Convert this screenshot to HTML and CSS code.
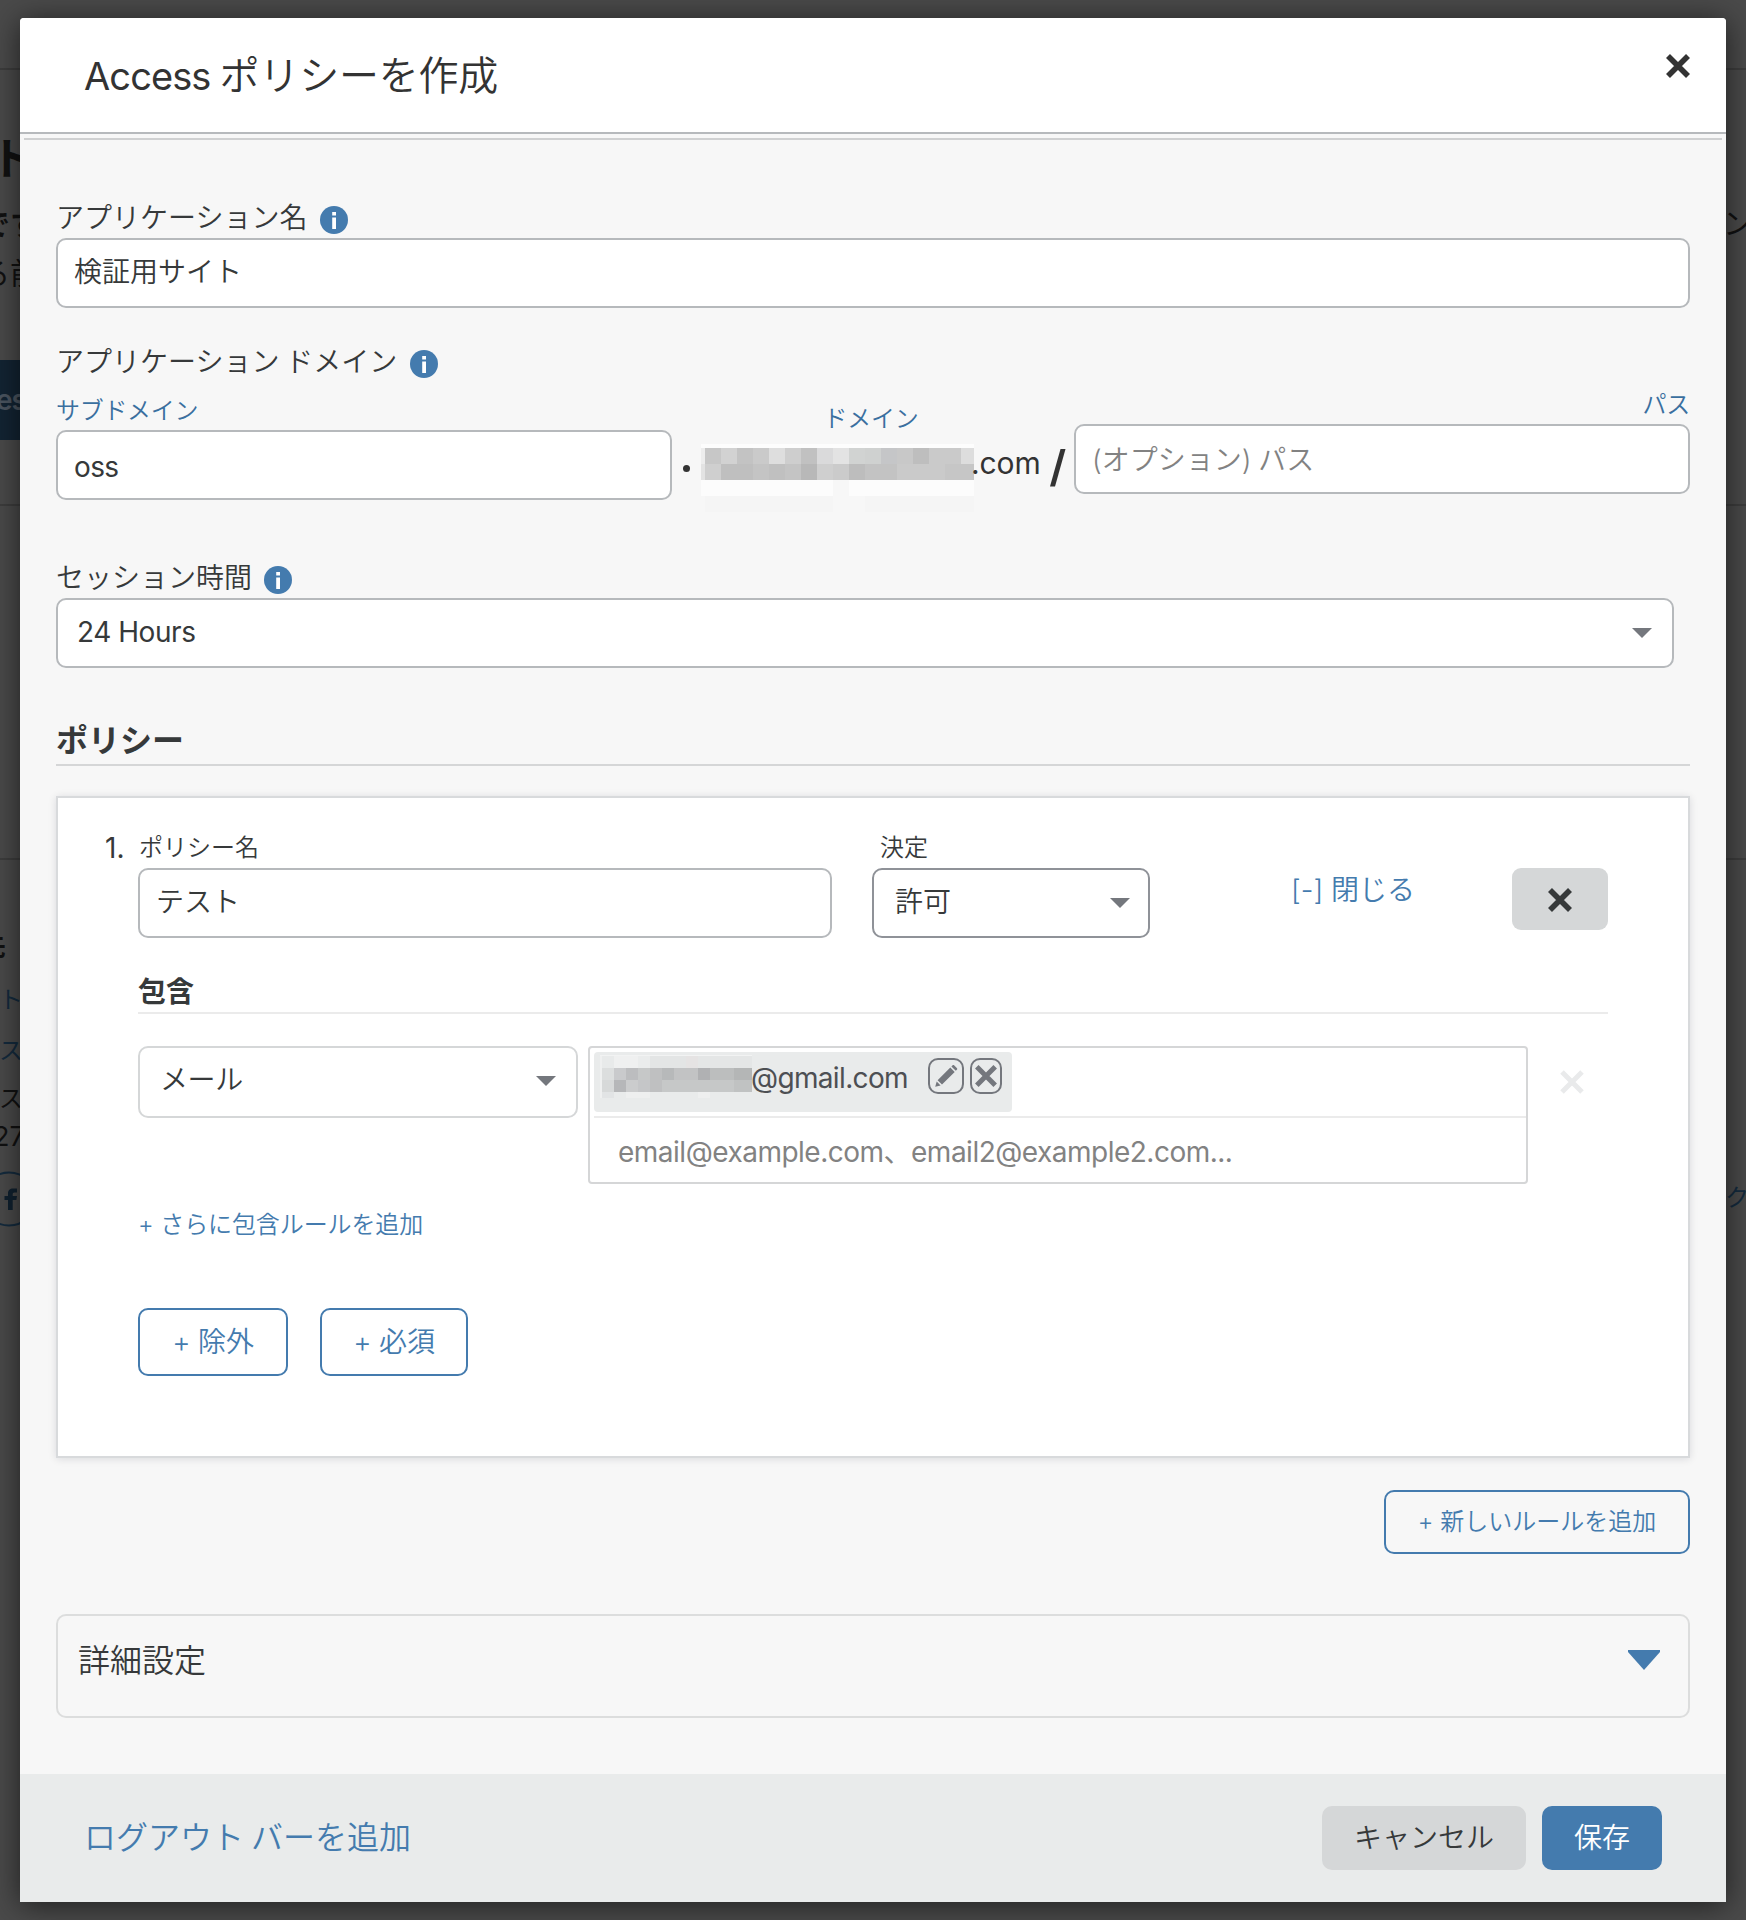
FILE: index.html
```html
<!DOCTYPE html>
<html lang="ja">
<head>
<meta charset="utf-8">
<title>Access ポリシーを作成</title>
<link rel="stylesheet" href="styles.css">
</head>
<body>
<div class="backdrop">
  <div class="page-left">
    <div class="pl pl-title">ト</div>
    <div class="pl pl-sub">です</div>
    <div class="pl pl-text">る前</div>
    <div class="pl pl-btn">ess</div>
    <div class="pl pl-head">先</div>
    <div class="pl pl-link">ト</div>
    <div class="pl pl-link2">ス</div>
    <div class="pl pl-plain">ス</div>
    <div class="pl pl-num">27</div>
    <svg class="pl-social" width="58" height="58" viewBox="0 0 58 58"><circle cx="29" cy="29" r="26.5" fill="none" stroke="#142b3e" stroke-width="2"/><path d="M28 40V30h-3.500v-4H28v-2.500c0-3.500 2-5 5-5h4v4h-2.500c-1.500 0-1.800.7-1.800 2V26H37l-.6 4h-3.700v10z" fill="#10212f"/></svg>
  </div>
  <div class="page-right">
    <div class="pr pr-text">ン</div>
    <div class="pr pr-link">ク</div>
  </div>
</div>

<div class="modal">
  <header class="modal-header">
    <h1 class="modal-title"><span class="title-latin">Access</span> ポリシーを作成</h1>
    <svg class="close" width="26" height="26" viewBox="0 0 26 26"><path d="M3 3L23 23M23 3L3 23" stroke="#333" stroke-width="5.600"/></svg>
  </header>
  <div class="rule-line"></div>
  <main class="form">
    <div class="label first">アプリケーション名<svg class="info" width="28" height="28" viewBox="0 0 28 28"><circle cx="14" cy="14" r="14" fill="#447bae"/><path d="M12.200 6h3.800v3.600h-3.800zM12.200 11.500h3.800v11.500h-3.800z" fill="#fff"/></svg></div>
    <div class="input">検証用サイト</div>

    <div class="label second">アプリケーション ドメイン<svg class="info" width="28" height="28" viewBox="0 0 28 28"><circle cx="14" cy="14" r="14" fill="#447bae"/><path d="M12.200 6h3.800v3.600h-3.800zM12.200 11.500h3.800v11.500h-3.800z" fill="#fff"/></svg></div>
    <div class="domain-row">
      <div class="sub-col">
        <div class="mini">サブドメイン</div>
        <div class="input latin">oss</div>
      </div>
      <div class="dom-col">
        <div class="mini center">ドメイン</div>
        <div class="dom-line">
          <span class="dot"></span>
          <svg class="mosaic" width="273" height="68" viewBox="0 0 273 68" shape-rendering="crispEdges">
            <path d="M0 0h273v4H0z" fill="#fdfdfd"/><path d="M0 4h4v16H0z" fill="#ededed"/><path d="M0 20h4v16H0z" fill="#e3e3e3"/>
            <path d="M4 4h16v16H4z" fill="#c7c7c7"/><path d="M20 4h16v16H20z" fill="#d2d2d2"/><path d="M36 4h16v16H36z" fill="#c3c3c3"/><path d="M52 4h16v16H52z" fill="#cacaca"/><path d="M68 4h16v16H68z" fill="#dedede"/><path d="M84 4h16v16H84z" fill="#cecece"/><path d="M100 4h16v16h-16z" fill="#c1c1c1"/><path d="M116 4h16v16h-16z" fill="#dadadb"/><path d="M132 4h16v16h-16z" fill="#e3e3e3"/><path d="M148 4h16v16h-16z" fill="#d1d3d2"/><path d="M164 4h16v16h-16z" fill="#cfd1d0"/><path d="M180 4h16v16h-16z" fill="#c5c6c8"/><path d="M196 4h16v16h-16z" fill="#c8c8c8"/><path d="M212 4h16v16h-16z" fill="#bebebe"/><path d="M228 4h32v16h-32z" fill="#cacaca"/><path d="M260 4h13v16h-13z" fill="#dddddd"/>
            <path d="M4 20h16v16H4z" fill="#cfcfcf"/><path d="M20 20h32v16H20z" fill="#bfbfbf"/><path d="M52 20h16v16H52z" fill="#c4c4c4"/><path d="M68 20h16v16H68z" fill="#c0c0c0"/><path d="M84 20h16v16H84z" fill="#c4c4c4"/><path d="M100 20h16v16h-16z" fill="#b8b8b8"/><path d="M116 20h16v16h-16z" fill="#cfcfcf"/><path d="M132 20h16v16h-16z" fill="#cbcbcb"/><path d="M148 20h16v16h-16z" fill="#bdbdbd"/><path d="M164 20h32v16h-32z" fill="#c3c3c3"/><path d="M196 20h48v16h-48z" fill="#cacaca"/><path d="M244 20h29v16h-29z" fill="#c6c6c6"/>
            <path d="M0 36h132v16H0zM148 36h125v16H148z" fill="#fcfcfc"/><path d="M4 52h128v16H4zM164 52h109v16H164z" fill="#f5f5f5"/>
          </svg>
          <span class="tld">.com</span>
          <svg class="slash" width="16" height="38" viewBox="0 0 16 38"><path d="M10.500 0H15.500L5 37.500H0z" fill="#333"/></svg>
        </div>
      </div>
      <div class="path-col">
        <div class="mini right">パス</div>
        <div class="input hint">(オプション) パス</div>
      </div>
    </div>

    <div class="label third">セッション時間<svg class="info" width="28" height="28" viewBox="0 0 28 28"><circle cx="14" cy="14" r="14" fill="#447bae"/><path d="M12.200 6h3.800v3.600h-3.800zM12.200 11.500h3.800v11.500h-3.800z" fill="#fff"/></svg></div>
    <div class="input select session"><span>24 Hours</span><i class="caret"></i></div>

    <h2 class="section">ポリシー</h2>

    <section class="card">
      <div class="policy-row">
        <span class="num">1.</span>
        <div class="name-col">
          <div class="small-label">ポリシー名</div>
          <div class="input">テスト</div>
        </div>
        <div class="dec-col">
          <div class="small-label indent">決定</div>
          <div class="input select dark"><span>許可</span><i class="caret"></i></div>
        </div>
        <a class="toggle">[-] 閉じる</a>
        <div class="remove"><svg width="26" height="26" viewBox="0 0 26 26"><path d="M3 3L23 23M23 3L3 23" stroke="#36393a" stroke-width="5.600"/></svg></div>
      </div>
      <div class="include">
        <h3 class="sub-section">包含</h3>
        <div class="include-row">
          <div class="input select light"><span>メール</span><i class="caret"></i></div>
          <div class="emails">
            <div class="chip">
              <svg class="chip-mosaic" width="152" height="43" viewBox="0 0 152 43" shape-rendering="crispEdges">
                <path d="M0 0h152v1H0z" fill="#f2f3f3"/><path d="M0 1h2v42H0z" fill="#eff0f0"/>
                <path d="M2 1h12v12H2z" fill="#e8eaea"/><path d="M14 1h24v12H14z" fill="#eff0f0"/><path d="M38 1h12v12H38z" fill="#eaecec"/><path d="M50 1h36v12H50z" fill="#e3e5e5"/><path d="M86 1h12v12H86z" fill="#e5e3e3"/><path d="M98 1h54v12H98z" fill="#e4e6e6"/>
                <path d="M2 13h12v12H2z" fill="#dcdede"/><path d="M14 13h12v12H14z" fill="#c9cacc"/><path d="M26 13h12v12H26z" fill="#bcbdbf"/><path d="M38 13h12v12H38z" fill="#c6c8c8"/><path d="M50 13h12v12H50z" fill="#bfc0c1"/><path d="M62 13h12v12H62z" fill="#b7b9ba"/><path d="M74 13h24v12H74z" fill="#c2c3c4"/><path d="M98 13h12v12H98z" fill="#b0b1b3"/><path d="M110 13h24v12h-24z" fill="#bcbebe"/><path d="M134 13h18v12h-18z" fill="#b4b6b6"/>
                <path d="M2 25h12v12H2z" fill="#d7d9d9"/><path d="M14 25h12v12H14z" fill="#b6b7b9"/><path d="M26 25h12v12H26z" fill="#cbcccd"/><path d="M38 25h12v12H38z" fill="#c5c6c8"/><path d="M50 25h12v12H50z" fill="#bfc0c1"/><path d="M62 25h72v12H62z" fill="#c6c8c8"/><path d="M134 25h18v12h-18z" fill="#c0c2c2"/>
                <path d="M2 37h12v6H2z" fill="#e2e4e5"/><path d="M26 37h24v6H26z" fill="#eeefef"/><path d="M98 37h12v6H98z" fill="#eeefef"/>
              </svg>
              <span class="chip-text">@gmail.com</span>
              <svg class="edit" width="36" height="36" viewBox="0 0 36 36" fill="#74777d"><rect x="1" y="1" width="34" height="34" rx="9" fill="none" stroke="#74777d" stroke-width="2"/><path d="M22.300 9.500l4.400 4.400L14 26.600 9.600 22.200zM23.400 8.400l1-1c.6-.6 1.300-.6 1.900 0l2.500 2.500c.6.600.6 1.300 0 1.900l-1 1zM8.700 23.500l3.900 4-5.400 1.300z"/></svg>
              <svg class="drop" width="32" height="36" viewBox="0 0 32 36"><rect x="1" y="1" width="30" height="34" rx="9" fill="none" stroke="#74777d" stroke-width="2"/><path d="M6.800 8.800L25.200 27.200M25.200 8.800L6.800 27.200" stroke="#74777d" stroke-width="5"/></svg>
            </div>
            <div class="email-hint">email@example.com、email2@example2.com...</div>
          </div>
          <svg class="row-x" width="26" height="26" viewBox="0 0 26 26"><path d="M3 3L23 23M23 3L3 23" stroke="#e9eaeb" stroke-width="5"/></svg>
        </div>
        <a class="more">+ さらに包含ルールを追加</a>
        <div class="buttons">
          <a class="btn outline exclude">+ 除外</a>
          <a class="btn outline require">+ 必須</a>
        </div>
      </div>
    </section>

    <a class="btn outline add-rule">+ 新しいルールを追加</a>

    <div class="advanced"><span>詳細設定</span><svg class="big-caret" width="32" height="21" viewBox="0 0 32 21"><path d="M0 0h32v2L16 20 0 2z" fill="#447bae"/></svg></div>
  </main>
  <footer class="modal-footer">
    <a class="logout">ログアウト バーを追加</a>
    <a class="btn gray">キャンセル</a>
    <a class="btn blue">保存</a>
  </footer>
</div>
</body>
</html>
```
FILE: styles.css
```css
* { box-sizing: border-box; }

body {
  margin: 0;
  width: 1746px;
  height: 1920px;
  overflow: hidden;
  position: relative;
  background: #4a4a4a;
  color: #36393a;
  font-family: Inter, "Noto Sans CJK JP", sans-serif;
  font-size: 28px;
  line-height: 40px;
}

h1, h2, h3 { margin: 0; }

/* dimmed page under the dialog */
.backdrop {
  display: flex;
  justify-content: space-between;
  height: 1920px;
  background:
    linear-gradient(#3d3d3d, #3d3d3d) 0 68px / 100% 2px no-repeat,
    linear-gradient(#3d3d3d, #3d3d3d) 0 504px / 100% 2px no-repeat,
    linear-gradient(#3d3d3d, #3d3d3d) 0 858px / 100% 2px no-repeat;
}
.page-left, .page-right { width: 20px; color: #111; }
.pl, .pr { white-space: nowrap; }
.pl-title { margin: 139px 0 0 -10px; font-size: 44px; font-weight: 700; }
.pl-sub { margin: 25px 0 0 -20px; font-size: 30px; font-weight: 700; line-height: 40px; }
.pl-text { margin: 9px 0 0 -20px; font-size: 30px; }
.pl-btn { margin-top: 67px; height: 80px; line-height: 80px; background: #132433; color: #4b5560; font-weight: 600; text-indent: -4px; letter-spacing: -1px; }
.pl-head { margin: 487px 0 0 -20px; font-size: 26px; font-weight: 700; }
.pl-link, .pl-link2 { color: #142b3e; font-size: 24px; }
.pl-link { margin: 13px 0 0 -1px; }
.pl-link2 { margin: 11px 0 0 -1px; }
.pl-plain { margin: 8px 0 0 -1px; font-size: 24px; }
.pl-num { margin: -2px 0 0 -7px; font-size: 27px; }
.pl-social { display: block; margin: 13px 0 0 -20px; }
.pr-text { margin: 203px 0 0 -3px; font-size: 30px; }
.pr-link { margin: 935px 0 0 -1px; font-size: 24px; color: #142b3e; }

/* dialog */
.modal {
  position: absolute;
  left: 20px;
  top: 18px;
  width: 1706px;
  height: 1884px;
  display: flex;
  flex-direction: column;
  border-radius: 4px 4px 0 0;
  background: #f7f7f7;
  box-shadow: 0 3px 30px rgba(0, 0, 0, .6);
  font-weight: 350;
}
.modal-header {
  display: flex;
  justify-content: space-between;
  height: 116px;
  padding: 35px 35px 0 64px;
  background: #fff;
  border-bottom: 2px solid #b6b9bc;
  border-radius: 4px 4px 0 0;
}
.modal-title { font-size: 40px; font-weight: 350; line-height: 45px; color: #333; letter-spacing: -.2px; word-spacing: -2px; }
.title-latin { font-size: 38px; font-weight: 400; letter-spacing: -.9px; }
.rule-line { height: 2px; margin: 4px 4px 0; background: #cfd0d1; }
.form { display: flex; flex-direction: column; padding: 0 36px; height: 1634px; }

.label { display: flex; height: 40px; word-spacing: -2px; }
.label.first { margin-top: 58px; }
.label.second { margin-top: 34px; }
.label.third { margin-top: 58px; }
.info { margin: 8px 0 0 13px; }
.third .info { margin-left: 12px; }

.input {
  height: 70px;
  padding: 12px 16px;
  background: #fff;
  border: 2px solid #b6b9bc;
  border-radius: 10px;
}
.input.latin { padding-top: 15px; letter-spacing: -.6px; font-weight: 400; }
.input.hint { padding-top: 14px; color: #828282; word-spacing: -1px; }
.select { display: flex; justify-content: space-between; padding: 12px 20px; }
.caret {
  width: 0;
  height: 0;
  margin-top: 16px;
  border: 10px solid transparent;
  border-top-color: #74777d;
  border-bottom: 0;
}
.session { width: 1618px; padding-left: 19px; letter-spacing: -.45px; font-weight: 400; }

.domain-row { display: grid; grid-template-columns: 616px 402px 616px; height: 118px; }
.sub-col { padding-top: 8px; }
.path-col { padding-top: 2px; }
.dom-col { padding-top: 17px; }
.mini { font-size: 24px; line-height: 42px; height: 40px; color: #3a6f9f; letter-spacing: -.3px; }
.mini.center { line-height: 40px; padding-right: 4px; text-align: center; }
.mini.right { text-align: right; }
.dom-line { display: flex; height: 68px; margin-top: 5px; }
.dot { width: 7px; height: 7px; margin: 21px 11px 0 11px; border-radius: 50%; background: #333; }
.mosaic { flex: none; }
.tld { width: 79px; margin: -1px 0 0 -3px; font-size: 30px; font-weight: 400; letter-spacing: -.1px; color: #333; }
.slash { margin-top: 5px; }

.section {
  margin-top: 52px;
  height: 46px;
  border-bottom: 2px solid #d5d6d7;
  font-size: 32px;
  font-weight: 700;
  line-height: 42px;
}
.card {
  height: 662px;
  margin-top: 30px;
  padding: 29px 80px 0 46px;
  background: #fff;
  border: 2px solid #d8dadc;
  box-shadow: 0 1px 8px rgba(0, 20, 40, .12);
}
.policy-row { display: flex; align-items: flex-start; height: 111px; }
.num { width: 34px; padding-left: 1px; line-height: 42px; font-weight: 400; }
.name-col { width: 694px; }
.small-label { height: 41px; font-size: 24px; line-height: 41px; padding-left: 1px; }
.small-label.indent { padding-left: 8px; }
.dec-col { width: 278px; margin-left: 40px; }
.input.dark { padding-right: 18px; padding-left: 21px; border-color: #8f9298; }
.toggle { width: 221px; margin: 43px 0 0 141px; color: #447bae; }
.remove {
  display: flex;
  align-items: center;
  justify-content: center;
  width: 96px;
  height: 62px;
  margin-top: 41px;
  padding-top: 1px;
  border-radius: 9px;
  background: #d5d7d8;
}
.include { margin: 34px 0 0 34px; }
.sub-section { height: 42px; border-bottom: 2px solid #ebebeb; font-size: 28px; font-weight: 700; }
.include-row { display: flex; height: 138px; margin-top: 32px; }
.input.light { width: 440px; height: 72px; border-color: #d5d7d8; letter-spacing: -.4px; }
.emails {
  width: 940px;
  height: 138px;
  margin-left: 10px;
  padding: 4px 0 0 4px;
  border: 2px solid #d5d6d7;
  border-radius: 4px;
}
.chip {
  display: flex;
  width: 418px;
  height: 60px;
  padding: 3px 0 0 6px;
  border-radius: 4px;
  background: #e9ebeb;
}
.chip-text { width: 177px; margin: 3px 0 0 -1px; color: #4d4f53; font-weight: 400; white-space: nowrap; letter-spacing: -.65px; }
.edit { margin: 3px 6px 0 0; }
.drop { margin-top: 3px; }
.email-hint {
  margin-top: 4px;
  padding: 14px 0 0 24px;
  border-top: 2px solid #ebebeb;
  color: #828282;
  font-weight: 400;
  letter-spacing: -.5px;
  white-space: nowrap;
}
.row-x { margin: 23px 0 0 31px; }
.more { display: block; margin-top: 21px; font-size: 24px; letter-spacing: -.1px; color: #447bae; }
.buttons { display: flex; gap: 32px; margin-top: 63px; }

.btn { display: block; border-radius: 10px; text-align: center; }
.outline { border: 2px solid #447bae; color: #447bae; }
.exclude { width: 150px; height: 68px; line-height: 64px; letter-spacing: -.2px; }
.require { width: 148px; height: 68px; line-height: 64px; letter-spacing: -.2px; }
.add-rule { width: 306px; height: 64px; margin: 32px 0 0 auto; font-size: 24px; line-height: 60px; }

.advanced {
  display: flex;
  justify-content: space-between;
  height: 104px;
  margin-top: 60px;
  padding: 24px 28px 0 20px;
  border: 2px solid #dcdddd;
  border-radius: 10px;
  font-size: 32px;
  line-height: 42px;
}
.big-caret { margin-top: 10px; }

.modal-footer {
  display: flex;
  height: 128px;
  padding: 32px 64px 0;
  background: #e9ebeb;
}
.logout { margin-right: auto; font-size: 32px; line-height: 64px; word-spacing: -2px; color: #447bae; }
.gray { width: 204px; height: 64px; line-height: 64px; background: #d5d7d8; }
.blue { width: 120px; height: 64px; margin-left: 16px; line-height: 64px; background: #447bae; color: #fff; }
```
